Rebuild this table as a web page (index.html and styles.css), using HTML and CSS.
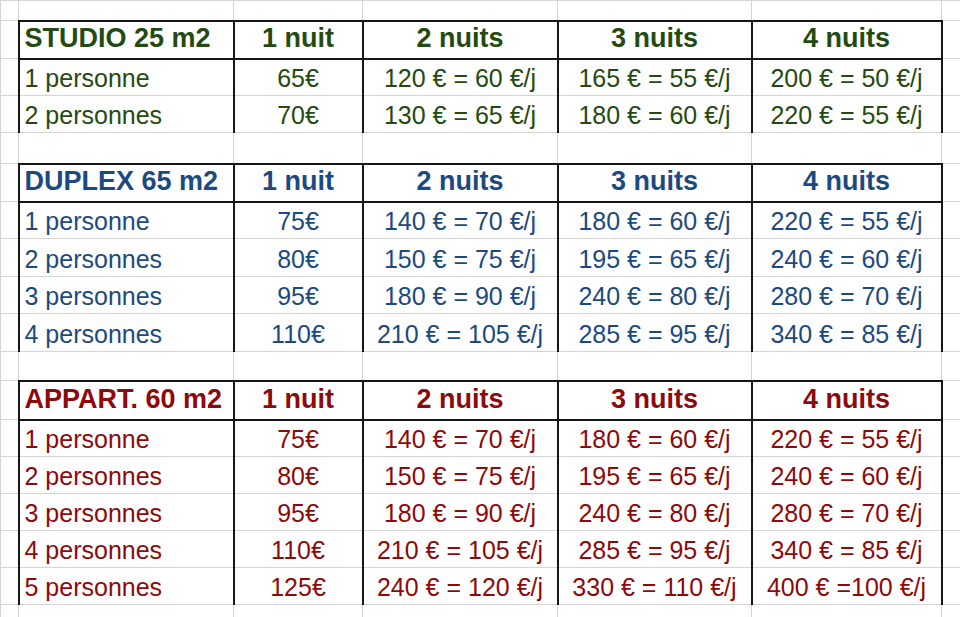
FILE: index.html
```html
<!DOCTYPE html>
<html lang="fr">
<head>
<meta charset="utf-8">
<title>Tarifs</title>
<link rel="stylesheet" href="styles.css">
</head>
<body>
<table class="sheet">
  <colgroup>
    <col class="c-edge"><col class="c-a"><col class="c-b"><col class="c-c"><col class="c-d"><col class="c-e"><col class="c-f">
  </colgroup>
  <tbody>
    <tr class="r-top"><td></td><td></td><td></td><td></td><td></td><td></td><td></td></tr>

    <tr class="r-head green">
      <td></td><td class="lbl b-l">STUDIO 25 m2</td><td class="b-l">1 nuit</td><td class="b-l">2 nuits</td><td class="b-l">3 nuits</td><td class="b-l b-r">4 nuits</td><td></td>
    </tr>
    <tr class="r-data green">
      <td></td><td class="lbl b-l">1 personne</td><td class="b-l">65€</td><td class="b-l">120 € = 60 €/j</td><td class="b-l">165 € = 55 €/j</td><td class="b-l b-r">200 € = 50 €/j</td><td></td>
    </tr>
    <tr class="r-data green">
      <td></td><td class="lbl b-l">2 personnes</td><td class="b-l">70€</td><td class="b-l">130 € = 65 €/j</td><td class="b-l">180 € = 60 €/j</td><td class="b-l b-r">220 € = 55 €/j</td><td></td>
    </tr>

    <tr class="r-gap1"><td></td><td></td><td></td><td></td><td></td><td></td><td></td></tr>

    <tr class="r-head blue">
      <td></td><td class="lbl b-l">DUPLEX 65 m2</td><td class="b-l">1 nuit</td><td class="b-l">2 nuits</td><td class="b-l">3 nuits</td><td class="b-l b-r">4 nuits</td><td></td>
    </tr>
    <tr class="r-data blue">
      <td></td><td class="lbl b-l">1 personne</td><td class="b-l">75€</td><td class="b-l">140 € = 70 €/j</td><td class="b-l">180 € = 60 €/j</td><td class="b-l b-r">220 € = 55 €/j</td><td></td>
    </tr>
    <tr class="r-data r-tall blue">
      <td></td><td class="lbl b-l">2 personnes</td><td class="b-l">80€</td><td class="b-l">150 € = 75 €/j</td><td class="b-l">195 € = 65 €/j</td><td class="b-l b-r">240 € = 60 €/j</td><td></td>
    </tr>
    <tr class="r-data blue">
      <td></td><td class="lbl b-l">3 personnes</td><td class="b-l">95€</td><td class="b-l">180 € = 90 €/j</td><td class="b-l">240 € = 80 €/j</td><td class="b-l b-r">280 € = 70 €/j</td><td></td>
    </tr>
    <tr class="r-data r-tall blue">
      <td></td><td class="lbl b-l">4 personnes</td><td class="b-l">110€</td><td class="b-l">210 € = 105 €/j</td><td class="b-l">285 € = 95 €/j</td><td class="b-l b-r">340 € = 85 €/j</td><td></td>
    </tr>

    <tr class="r-gap2"><td></td><td></td><td></td><td></td><td></td><td></td><td></td></tr>

    <tr class="r-head r-head-tall red">
      <td></td><td class="lbl b-l">APPART. 60 m2</td><td class="b-l">1 nuit</td><td class="b-l">2 nuits</td><td class="b-l">3 nuits</td><td class="b-l b-r">4 nuits</td><td></td>
    </tr>
    <tr class="r-data red">
      <td></td><td class="lbl b-l">1 personne</td><td class="b-l">75€</td><td class="b-l">140 € = 70 €/j</td><td class="b-l">180 € = 60 €/j</td><td class="b-l b-r">220 € = 55 €/j</td><td></td>
    </tr>
    <tr class="r-data red">
      <td></td><td class="lbl b-l">2 personnes</td><td class="b-l">80€</td><td class="b-l">150 € = 75 €/j</td><td class="b-l">195 € = 65 €/j</td><td class="b-l b-r">240 € = 60 €/j</td><td></td>
    </tr>
    <tr class="r-data red">
      <td></td><td class="lbl b-l">3 personnes</td><td class="b-l">95€</td><td class="b-l">180 € = 90 €/j</td><td class="b-l">240 € = 80 €/j</td><td class="b-l b-r">280 € = 70 €/j</td><td></td>
    </tr>
    <tr class="r-data red">
      <td></td><td class="lbl b-l">4 personnes</td><td class="b-l">110€</td><td class="b-l">210 € = 105 €/j</td><td class="b-l">285 € = 95 €/j</td><td class="b-l b-r">340 € = 85 €/j</td><td></td>
    </tr>
    <tr class="r-data red">
      <td></td><td class="lbl b-l">5 personnes</td><td class="b-l">125€</td><td class="b-l">240 € = 120 €/j</td><td class="b-l">330 € = 110 €/j</td><td class="b-l b-r">400 € =100 €/j</td><td></td>
    </tr>

    <tr class="r-end"><td></td><td></td><td></td><td></td><td></td><td></td><td></td></tr>
  </tbody>
</table>
</body>
</html>
```

FILE: styles.css
```css
html, body {
  margin: 0;
  padding: 0;
  background: #ffffff;
  overflow: hidden;
}

.sheet {
  border-collapse: collapse;
  table-layout: fixed;
  width: 960px;
  font-family: "Liberation Sans", Arial, sans-serif;
  font-size: 25px;
  line-height: 1.15;
}

.c-edge { width: 18px; }
.c-a { width: 215px; }
.c-b { width: 129px; }
.c-c { width: 195px; }
.c-d { width: 194px; }
.c-e { width: 190px; }
.c-f { width: 19px; }

.sheet td {
  box-sizing: border-box;
  border: 1px solid #d4d4d4;
  padding: 0 2px 2px;
  text-align: center;
  vertical-align: bottom;
  white-space: nowrap;
  overflow: hidden;
}

.sheet td.lbl {
  text-align: left;
  padding-left: 5px;
}

.sheet td.b-l { border-left: 2px solid #161616; }
.sheet td.b-r { border-right: 2px solid #161616; }

.r-top td { height: 20px; }
.r-gap1 td { height: 31px; }
.r-gap2 td { height: 29px; }
.r-end td { height: 14px; }

.r-data td { height: 37px; }
.r-data.r-tall td { height: 38px; }

.r-head td {
  height: 38px;
  font-weight: bold;
  font-size: 27px;
  vertical-align: middle;
  padding-bottom: 1px;
  border-top: 2px solid #161616;
  border-bottom: 2px solid #161616;
}
.r-head.r-head-tall td { height: 39px; }

.r-head td:first-child,
.r-head td:last-child {
  border-top: 1px solid #d4d4d4;
  border-bottom: 1px solid #d4d4d4;
}

.green { color: #244a10; }
.blue { color: #1c4a80; }
.red { color: #8c0a0a; }
```
